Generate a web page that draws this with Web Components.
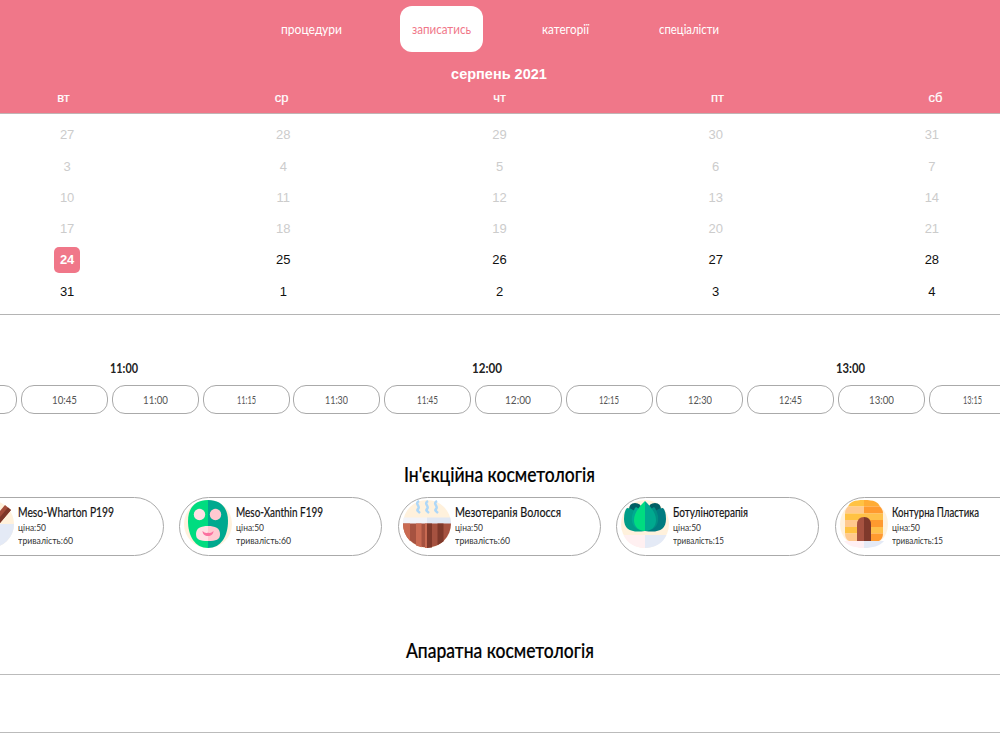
<!DOCTYPE html>
<html lang="uk">
<head>
<meta charset="utf-8">
<title>Запис</title>
<style>
  body {
    margin: 0;
    height: 750px;
    overflow: hidden;
    background: #fff;
    color: #111;
    font-family: "Liberation Sans", Arial, sans-serif;
  }
</style>
</head>
<body>
<booking-page></booking-page>

<script>
// One line of text, condensed or stretched to the given width
class FitText extends HTMLElement {
  connectedCallback() {
    this.attachShadow({ mode: 'open' });
    const width = this.getAttribute('w');
    this.shadowRoot.innerHTML = `
      <style>
        :host {
          display: block;
          width: ${width}px;
          white-space: nowrap;
          font-family: Lato, sans-serif;
        }
        span {
          display: inline-block;
          transform-origin: 0 50%;
        }
      </style>
      <span><slot></slot></span>
    `;
    const span = this.shadowRoot.querySelector('span');
    const natural = span.getBoundingClientRect().width;
    if (natural) span.style.transform = `scaleX(${width / natural})`;
  }
}
customElements.define('fit-text', FitText);

class SiteNav extends HTMLElement {
  connectedCallback() {
    this.attachShadow({ mode: 'open' });
    this.shadowRoot.innerHTML = `
      <style>
        :host { display: block; padding-top: 6px; }
        nav {
          display: grid;
          grid-template-columns: 136px 124px 124px 124px;
          justify-content: center;
          margin-left: -6px;
        }
        a {
          display: flex;
          justify-content: center;
          align-items: center;
          justify-self: center;
          height: 46px;
          padding: 0 12px;
          border-radius: 12px;
          color: #fff;
          font-size: 13px;
          line-height: 16px;
        }
        a.active { background: #fff; color: #f07789; }
      </style>
      <nav>
        <a><fit-text w="61">процедури</fit-text></a>
        <a class="active"><fit-text w="59">записатись</fit-text></a>
        <a><fit-text w="47">категорії</fit-text></a>
        <a><fit-text w="60">спеціалісти</fit-text></a>
      </nav>
    `;
  }
}
customElements.define('site-nav', SiteNav);

class MonthCalendar extends HTMLElement {
  connectedCallback() {
    const weekdays = ['вт', 'ср', 'чт', 'пт', 'сб'];
    const weeks = [
      [27, 28, 29, 30, 31],
      [3, 4, 5, 6, 7],
      [10, 11, 12, 13, 14],
      [17, 18, 19, 20, 21],
      [24, 25, 26, 27, 28],
      [31, 1, 2, 3, 4],
    ];
    const cell = (day, row, col) => {
      const cls = row < 4 ? 'past' : row === 4 && col === 0 ? 'today' : '';
      return `<div><span class="${cls}">${day}</span></div>`;
    };
    this.attachShadow({ mode: 'open' });
    this.shadowRoot.innerHTML = `
      <style>
        :host { display: block; }
        header {
          box-sizing: border-box;
          height: 114px;
          background: #f07789;
          border-bottom: 1px solid #c0b4b4;
          color: #fff;
          overflow: hidden;
        }
        h2 {
          margin: 13px 0 0;
          font-size: 14.5px;
          line-height: 18px;
          text-align: center;
          text-indent: -2px;
        }
        .weekdays {
          display: grid;
          grid-template-columns: repeat(5, 218px);
          justify-content: center;
          margin: 6px 1px 0 0;
          font-size: 13px;
          line-height: 18px;
          text-align: center;
          -webkit-text-stroke: .2px #fff;
        }
        .days {
          display: grid;
          grid-template-columns: repeat(5, 216.2px);
          grid-auto-rows: 31.3px;
          justify-content: center;
          box-sizing: border-box;
          height: 201px;
          padding: 5.6px 1px 0 0;
          border-bottom: 1px solid #b4b4b4;
          font-size: 13px;
        }
        .days div { display: flex; align-items: center; justify-content: center; }
        span { width: 26px; line-height: 26px; text-align: center; }
        .past { color: #ccc; }
        .today { background: #f07789; color: #fff; border-radius: 5px; font-weight: bold; }
      </style>
      <header>
        <slot></slot>
        <h2>серпень 2021</h2>
        <div class="weekdays">${weekdays.map(d => `<div>${d}</div>`).join('')}</div>
      </header>
      <div class="days">${weeks.map((w, r) => w.map((d, c) => cell(d, r, c)).join('')).join('')}</div>
    `;
  }
}
customElements.define('month-calendar', MonthCalendar);

class TimeSlots extends HTMLElement {
  connectedCallback() {
    const hours = [['11:00', 28], ['12:00', 30], ['13:00', 29]];
    const slots = [
      ['', 0], ['10:45', 25], ['11:00', 25], ['11:15', 19], ['11:30', 23], ['11:45', 21],
      ['12:00', 26], ['12:15', 20], ['12:30', 24], ['12:45', 23], ['13:00', 25], ['13:15', 19],
    ];
    this.attachShadow({ mode: 'open' });
    this.shadowRoot.innerHTML = `
      <style>
        :host { display: block; height: 146px; padding-top: 45px; box-sizing: border-box; overflow: hidden; }
        .hours {
          display: grid;
          grid-template-columns: repeat(3, 363px);
          margin-left: -57.5px;
          justify-items: center;
          font-size: 12.5px;
          font-weight: bold;
          line-height: 18px;
          color: #222;
        }
        .slots { display: flex; gap: 3.75px; margin: 7px 0 0 -69.7px; }
        .slot {
          flex: none;
          box-sizing: border-box;
          width: 87px;
          height: 29px;
          display: flex;
          align-items: center;
          justify-content: center;
          border: 1px solid #aaa;
          border-radius: 13px;
          font-size: 10.5px;
          color: #555;
        }
      </style>
      <div class="hours">${hours.map(([t, w]) => `<fit-text w="${w}">${t}</fit-text>`).join('')}</div>
      <div class="slots">${slots.map(([t, w]) =>
        `<div class="slot">${t ? `<fit-text w="${w}">${t}</fit-text>` : ''}</div>`).join('')}</div>
    `;
  }
}
customElements.define('time-slots', TimeSlots);

const icons = {
  stick: `
    <circle cx="24" cy="24" r="24" fill="#fff1dc"/>
    <path d="M0 24h48a24 24 0 0 1-48 0z" fill="#e4eaf6"/>
    <path d="M18 30 39 5l6 5-21 25z" fill="#a34c39"/>
    <path d="M21 32.5 42 7.5l3 2.5-21 25z" fill="#7d3627"/>`,
  mask: `
    <circle cx="24" cy="24" r="24" fill="#fff1dc"/>
    <path d="M24 0C11 0 4 8 4 21c0 15 7 27 20 27z" fill="#00dc80"/>
    <path d="M24 0c13 0 20 8 20 21 0 15-7 27-20 27z" fill="#00a98f"/>
    <circle cx="15.5" cy="14.5" r="5.7" fill="#ffe0e5"/>
    <circle cx="31.5" cy="14.5" r="5.7" fill="#ffc9d1"/>
    <path d="M24 26c-7 0-12 2-12 8s4 7 12 7z" fill="#ffe0e5"/>
    <path d="M24 26c7 0 12 2 12 8s-4 7-12 7z" fill="#ffc9d1"/>
    <path d="M18.5 31q3 3 5.5 1.500 2.500 1.500 5.500-1.500c0 3-2.500 5-5.500 5s-5.500-2-5.500-5z" fill="#fb70a0"/>`,
  sauna: `
    <circle cx="24" cy="24" r="24" fill="#fff1dc"/>
    <path d="M.8 17.5H24V24H0q0-3 .8-6.5z" fill="#f2f3f8"/>
    <path d="M24 17.5h23.200Q48 21 48 24H24z" fill="#e0e7f3"/>
    <path d="M0 23.5h48a24 24 0 0 1-48 0z" fill="#a65240"/>
    <path d="M0 23.5h7v17.400Q0 34 0 23.5zM13 23.5h5.500v23.700l-5.500-1.800zM24 23.500V48l-2-.1V23.500z" fill="#c96a52"/>
    <path d="M24 23.5h5v24l-5 .5zM34.500 23.500h6v18l-6 3.800z" fill="#7f392b"/>
    <path d="M16 1c-5 3 2 5-1 8-1.500 1.500 0 2 2 4M25 1c-5 3 2 5-1 8-1.500 1.500 0 2 2 4M34 1c-5 3 2 5-1 8-1.500 1.500 0 2 2 4" fill="none" stroke="#add7f8" stroke-width="2.5"/>`,
  leaves: `
    <circle cx="24" cy="24" r="24" fill="#fff1dc"/>
    <path d="M2.500 35H24v13C14 48 6 43 2.500 35z" fill="#fff0f1"/>
    <path d="M24 35h21.500C42 43 34 48 24 48z" fill="#e4eaf6"/>
    <path d="M8 10q0-7 6-7 6 0 7 6l-5 11zM40 10q0-7-6-7-6 0-7 6l5 11z" fill="#005f64"/>
    <path d="M24 31C11 33 3 30 3 19q0-8 3-11 7 0 12 9z" fill="#009d88"/>
    <path d="M24 31c13 2 21-1 21-12q0-8-3-11-7 0-12 9z" fill="#007b80"/>
    <path d="M24 31C13 30 10 24 11 16q1-6 4-9 6 3 9 12z" fill="#00aa91"/>
    <path d="M24 31c11-1 14-7 13-15q-1-6-4-9-6 3-9 12z" fill="#008f83"/>
    <path d="M24 1C17 8 13 14 13 20c0 7 5 11 11 11z" fill="#00dc80"/>
    <path d="M24 1c7 7 11 13 11 19 0 7-5 11-11 11z" fill="#00a98f"/>`,
  hive: `
    <circle cx="24" cy="24" r="24" fill="#fff1dc"/>
    <path d="M4 41h20v7C16 48 8 46 4 41z" fill="#fff0f4"/>
    <path d="M24 41h20c-4 5-12 7-20 7z" fill="#e4eaf6"/>
    <path d="M24 0C14 0 10 2 8 6.500h16z" fill="#ffc243"/>
    <path d="M24 0c10 0 14 2 16 6.500H24z" fill="#ffac35"/>
    <path d="M8 6.500h16v7H5q0-4 3-7z" fill="#ffc98e"/>
    <path d="M24 6.500h16q3 3 3 7H24z" fill="#ff9a2f"/>
    <path d="M5 13.500h19V20H5zM5 27h19v6.500H5z" fill="#ffc243"/>
    <path d="M24 13.500h19V20H24zM24 27h19v6.500H24z" fill="#ffc04a"/>
    <path d="M5 20h19v7H5zM5 33.500h19V41H9q-4-2-4-7.500z" fill="#ffc98e"/>
    <path d="M24 20h19v7H24zM24 33.500h19q0 5.500-4 7.500H24z" fill="#ff9a2f"/>
    <path d="M17 41V25q0-8 7-8v24z" fill="#a65240"/>
    <path d="M24 17q7 0 7 8v16h-7z" fill="#7f392b"/>`,
};

class ServiceCard extends HTMLElement {
  connectedCallback() {
    const get = name => this.getAttribute(name);
    const [titleWidth, priceWidth, durationWidth] = get('widths').split(' ');
    this.attachShadow({ mode: 'open' });
    this.shadowRoot.innerHTML = `
      <style>
        :host {
          flex: none;
          box-sizing: border-box;
          width: 203px;
          height: 59px;
          padding: 2px 0 0 4px;
          display: flex;
          gap: 4px;
          border: 1px solid #aaa;
          border-radius: 30px;
        }
        svg { width: 48px; height: 48px; flex: none; }
        .info { padding-top: 3px; font-size: 10px; line-height: 13.3px; color: #333; }
        .title { font-size: 13px; line-height: 18px; color: #111; -webkit-text-stroke: .2px #222; }
      </style>
      <svg viewBox="0 0 48 48">${icons[get('icon')]}</svg>
      <div class="info">
        <fit-text class="title" w="${titleWidth}">${get('name')}</fit-text>
        <fit-text w="${priceWidth}">ціна:${get('price')}</fit-text>
        <fit-text w="${durationWidth}">тривалість:${get('duration')}</fit-text>
      </div>
    `;
  }
}
customElements.define('service-card', ServiceCard);

class ServiceGroup extends HTMLElement {
  connectedCallback() {
    this.attachShadow({ mode: 'open' });
    this.shadowRoot.innerHTML = `
      <style>
        :host { display: block; overflow: hidden; }
        h3 {
          display: flex;
          justify-content: center;
          margin: 0;
          font-size: 21px;
          font-weight: 500;
          line-height: 30px;
          color: #000;
          -webkit-text-stroke: .2px #000;
        }
        .row { display: flex; gap: 15.4px; margin: 8px 0 0 -38px; }
        .row.empty {
          height: 57px;
          margin: 9px 0 0;
          border: 1px solid #bbb;
          border-width: 1px 0;
        }
      </style>
      <h3><fit-text w="${this.getAttribute('w')}">${this.getAttribute('name')}</fit-text></h3>
      <div class="row ${this.children.length ? '' : 'empty'}"><slot></slot></div>
    `;
  }
}
customElements.define('service-group', ServiceGroup);

class BookingPage extends HTMLElement {
  connectedCallback() {
    this.attachShadow({ mode: 'open' });
    this.shadowRoot.innerHTML = `
      <style>
        :host { display: block; width: 1000px; height: 750px; overflow: hidden; }
        service-group { margin-left: -1px; }
        service-group:first-of-type { margin: -2px 0 79px -1px; }
      </style>
      <month-calendar><site-nav></site-nav></month-calendar>
      <time-slots></time-slots>
      <service-group name="Ін'єкційна косметологія" w="191">
        <service-card icon="stick" name="Meso-Wharton P199" price="50" duration="60" widths="96 28 55"></service-card>
        <service-card icon="mask" name="Meso-Xanthin F199" price="50" duration="60" widths="87 28 55"></service-card>
        <service-card icon="sauna" name="Мезотерапія Волосся" price="50" duration="60" widths="106 28 55"></service-card>
        <service-card icon="leaves" name="Ботулінотерапія" price="50" duration="15" widths="75 28 51"></service-card>
        <service-card icon="hive" name="Контурна Пластика" price="50" duration="15" widths="87 28 51"></service-card>
      </service-group>
      <service-group name="Апаратна косметологія" w="188"></service-group>
    `;
  }
}
customElements.define('booking-page', BookingPage);
</script>
</body>
</html>
